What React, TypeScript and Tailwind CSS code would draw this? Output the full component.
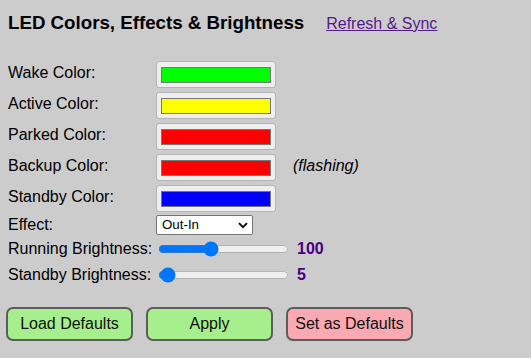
import React from 'react'

const colorRows = [
  { label: 'Wake Color:', color: '#00ff00' },
  { label: 'Active Color:', color: '#ffff00' },
  { label: 'Parked Color:', color: '#ff0000' },
  { label: 'Backup Color:', color: '#ff0000', note: '(flashing)' },
  { label: 'Standby Color:', color: '#0000ff' },
]

function ColorBox({ color }: { color: string }) {
  return (
    <div className="w-[120px] h-[27px] border border-[#b4b4b4] rounded-[3px] bg-[#efefef] flex items-center justify-center">
      <div className="w-[110px] h-[16px] border border-[#777777]" style={{ backgroundColor: color }} />
    </div>
  )
}

function Slider({ label, value, max }: { label: string; value: number; max: number }) {
  return (
    <div className="flex items-center h-[22px]">
      <div className="w-[148px] text-base leading-[18px]">{label}</div>
      <input
        type="range"
        min={0}
        max={max}
        defaultValue={value}
        className="ml-[2px] w-[131px] h-[16px]"
      />
      <span className="ml-[8px] text-base font-bold text-[#4b0082]">{value}</span>
    </div>
  )
}

export default function App() {
  return (
    <div className="min-h-[358px] bg-[#cccccc] px-2 text-black font-['Liberation_Sans',Arial,sans-serif]">
      <div className="flex items-baseline pt-[12px]">
        <h3 className="text-[18.72px] font-bold leading-[21px]">LED Colors, Effects &amp; Brightness</h3>
        <a href="#" className="ml-[22px] text-base underline text-[#551a8b]">Refresh &amp; Sync</a>
      </div>

      <div className="mt-[25px]">
        {colorRows.map((r, i) => (
          <div key={r.label} className={`flex items-center h-[27px] ${i > 0 ? 'mt-[4px]' : ''}`}>
            <div className="w-[148px] text-base leading-[18px] pb-[3px]">{r.label}</div>
            <ColorBox color={r.color} />
            {r.note && <span className="ml-[17px] italic text-base pb-[3px]">{r.note}</span>}
          </div>
        ))}

        <div className="flex items-center h-[20px] mt-[3px]">
          <div className="w-[148px] text-base leading-[18px]">Effect:</div>
          <div className="relative w-[97px] h-[20px] border border-[#767676] rounded-[2px] bg-white flex items-center">
            <span className="pl-[5px] text-[13.33px] leading-none">Out-In</span>
            <svg className="absolute right-[4px] top-[6px]" width="10" height="7" viewBox="0 0 10 7">
              <path d="M1 1.2 L5 5.2 L9 1.2" fill="none" stroke="#000" strokeWidth="1.8" />
            </svg>
          </div>
        </div>

        <div className="mt-[3px]">
          <Slider label="Running Brightness:" value={100} max={255} />
        </div>
        <div className="mt-[4px]">
          <Slider label="Standby Brightness:" value={5} max={255} />
        </div>
      </div>

      <div className="flex gap-[13px] mt-[21px] -ml-[2px]">
        <button className="w-[127px] h-[34px] border-2 border-[#5c5c5c] rounded-[7px] bg-[#a6ef8c] text-base text-[#111]">Load Defaults</button>
        <button className="w-[127px] h-[34px] border-2 border-[#5c5c5c] rounded-[7px] bg-[#a6ef8c] text-base text-[#111]">Apply</button>
        <button className="w-[127px] h-[34px] border-2 border-[#5c5c5c] rounded-[7px] bg-[#f8a9b1] text-base text-[#111]">Set as Defaults</button>
      </div>
    </div>
  )
}
